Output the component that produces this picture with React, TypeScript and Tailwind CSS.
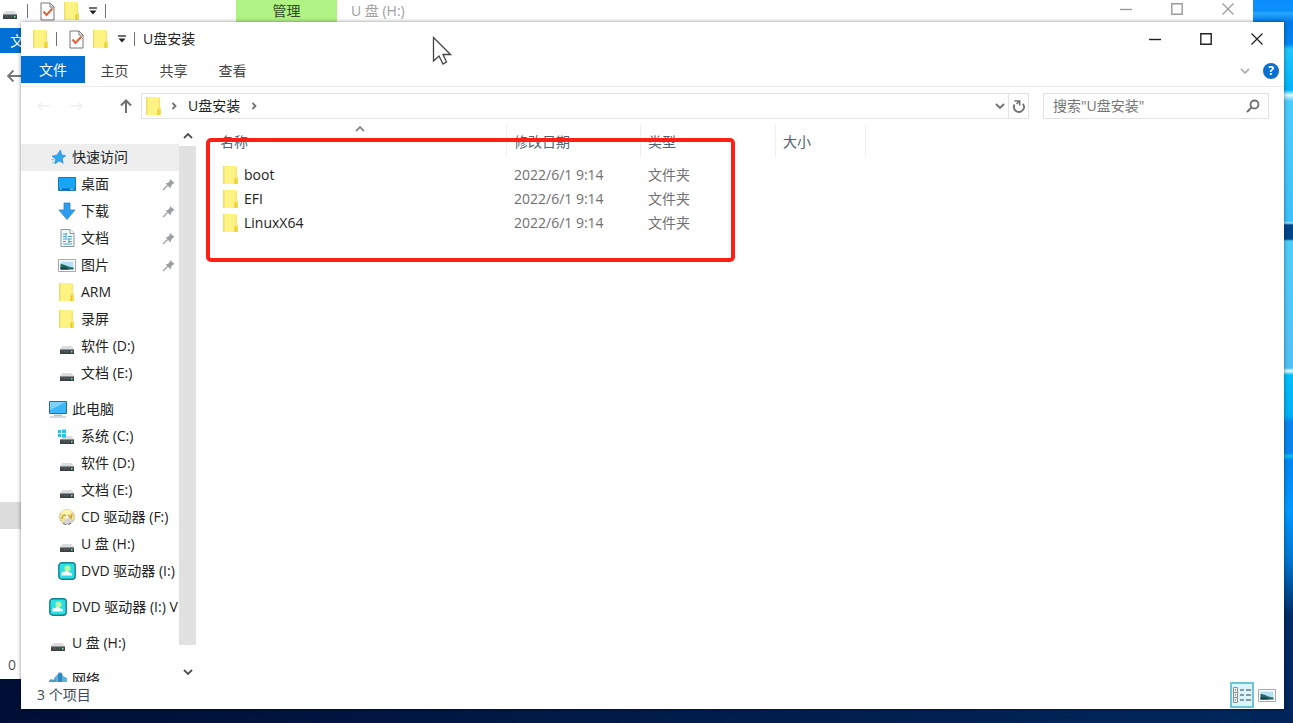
import type { ReactNode } from "react";

interface NavItem {
  name: string;
  icon: ReactNode;
  pinned?: boolean;
}

interface NavGroup extends NavItem {
  children?: NavItem[];
}

const FolderIcon = () => (
  <svg width="18" height="20" viewBox="0 0 18 20" className="shrink-0">
    <path d="M1.5 1h13v18h-13z" fill="#fdf382" />
    <path d="M1 1h1.500v18H1z" fill="#f0dc6c" />
    <path d="M13.500 2.500l1.500-.5v17h-1.500z" fill="#f8e668" />
    <path d="M12 13.500l3-1.500 1 1v6h-4z" fill="#f4de4a" />
    <path d="M13.500 14v5" stroke="#e2c63c" strokeWidth="1" />
  </svg>
);

const CheckDocIcon = () => (
  <svg width="15" height="19" viewBox="0 0 15 19" className="shrink-0">
    <path d="M1 1h9l4 4v13H1z" fill="#fff" stroke="#777" />
    <path d="M10 1v4h4" fill="none" stroke="#777" />
    <path d="M3.500 9.500l3 3.500 6-6.500" fill="none" stroke="#e0633c" strokeWidth="2" />
  </svg>
);

const CaretIcon = () => (
  <svg width="10" height="8" viewBox="0 0 10 8" className="shrink-0">
    <path d="M1 1h8" stroke="#222" strokeWidth="1.300" />
    <path d="M1.500 3.500h7L5 7.500z" fill="#222" />
  </svg>
);

const DriveIcon = () => (
  <svg width="18" height="18" viewBox="0 0 18 18" className="shrink-0">
    <path d="M4.500 9h9l2.500 3H2z" fill="#dadcde" />
    <path d="M2 12h14v5H2z" fill="#3b4044" />
    <path d="M2 12h14v1.200H2z" fill="#8a9094" />
    <path d="M4 14.800h7" stroke="#6b7276" strokeDasharray="1 1" />
    <path d="M13 14h1.500v1.500H13z" fill="#7df0a0" />
  </svg>
);

const SystemDriveIcon = () => (
  <svg width="18" height="18" viewBox="0 0 18 18" className="shrink-0">
    <path d="M6 9h7.500l2.500 3H3z" fill="#dadcde" />
    <path d="M2 12h14v5H2z" fill="#3b4044" />
    <path d="M2 12h14v1.200H2z" fill="#8a9094" />
    <path d="M4 14.800h7" stroke="#6b7276" strokeDasharray="1 1" />
    <path d="M13 14h1.500v1.500H13z" fill="#7df0a0" />
    <path d="M0 3h3v3H0zM4 2.500h4V6H4zM0 7h3v3H0zM4 7h4v3.500H4z" fill="#22c2ea" />
  </svg>
);

const StarIcon = () => (
  <svg width="18" height="18" viewBox="0 0 18 18" className="shrink-0">
    <path
      d="M11.500 2l1 4.700 4.300 1.100-3.600 2.700 1 4.800-4.100-2.400-4.200 3 .9-4.700L3 8l4.800-.8z"
      fill="#2fa8ee"
      stroke="#1b84cc"
      strokeWidth=".6"
    />
    <path d="M2 12l3.500-1M3 15l3-2" stroke="#6cc4f4" />
  </svg>
);

const DesktopIcon = () => (
  <svg width="18" height="18" viewBox="0 0 18 18" className="shrink-0">
    <path d="M.5 2.500h17v13H.5z" fill="#16a5f7" stroke="#1678b8" />
    <path d="M1 13.500h16V15H1z" fill="#0b6cb0" />
    <path d="M2 14.200h1.500M12 14.200h3.500" stroke="#9be0ff" />
  </svg>
);

const DownloadIcon = () => (
  <svg width="18" height="18" viewBox="0 0 18 18" className="shrink-0">
    <path d="M6 1h6v7h5l-8 9.500L1 8h5z" fill="#2d9df0" stroke="#1d7cc6" strokeWidth=".7" />
  </svg>
);

const DocumentIcon = () => (
  <svg width="18" height="18" viewBox="0 0 18 18" className="shrink-0">
    <path d="M3 .5h9l4 4v13H3z" fill="#f3f8fa" stroke="#8b979c" />
    <path d="M12 .5v4h4" fill="#fff" stroke="#8b979c" />
    <path d="M5 5h4M5 7.500h3m2 0h4M5 10h9M5 12.500h3m2 0h4M5 15h9" stroke="#4aa5c6" />
    <path d="M8 4v5M11 10v4" stroke="#4aa5c6" />
  </svg>
);

const PictureIcon = () => (
  <svg width="18" height="18" viewBox="0 0 18 18" className="shrink-0">
    <path d="M.5 3.500h17v12H.5z" fill="#fff" stroke="#a4a9ac" />
    <path d="M2.500 5.500h13v8h-13z" fill="#b6e0f5" />
    <path d="M2.500 8c4 0 7 3 13 3.500v2h-13z" fill="#256a62" />
    <path d="M2.500 11.500h5l4 2h-9z" fill="#123d52" />
  </svg>
);

const ComputerIcon = () => (
  <svg width="18" height="18" viewBox="0 0 18 18" className="shrink-0">
    <path d="M.5 1.500h17v12H.5z" fill="#3bb7f8" stroke="#276f9c" />
    <path d="M1 2h16L1 10z" fill="#7dd3fb" />
    <path d="M5 15.200h8" stroke="#9aa4aa" />
    <path d="M1 17h16" stroke="#a9b6bd" />
  </svg>
);

const DiscIcon = () => (
  <svg width="18" height="18" viewBox="0 0 18 18" className="shrink-0">
    <circle cx="9" cy="9" r="7.500" fill="#f3e690" stroke="#cfc6a0" />
    <path d="M3 4.500a7.500 7.500 0 0 1 11-1L9 9z" fill="#fbf3b0" />
    <path d="M15.500 12a7.500 7.500 0 0 1-11 3L9 9z" fill="#d6d2da" />
    <path d="M4 11c0-4 3-5 4-3M10 7l3 3 1-4" fill="none" stroke="#c99a3c" strokeWidth="1.400" />
    <circle cx="9" cy="9" r="1.500" fill="#fff" />
    <path d="M5 15.500l3 1M10 16.500l3-1.500" stroke="#77757c" />
  </svg>
);

const DvdIcon = () => (
  <svg width="18" height="18" viewBox="0 0 18 18" className="shrink-0">
    <rect x=".8" y=".8" width="16.400" height="16.400" rx="3" fill="#2be0e4" stroke="#167f8c" strokeWidth="1.400" />
    <circle cx="9.500" cy="6.500" r="3" fill="#b8f5a0" />
    <path d="M3.500 13.500c-.5-2.500 1-4.500 3-3.500 1-2 4-1.500 4.500.5 2-.5 3.500 1 3 3z" fill="#f2fffd" />
  </svg>
);

const NetworkIcon = () => (
  <svg width="18" height="18" viewBox="0 0 18 18" className="shrink-0">
    <path d="M5 8l4-4 1-2 3 1 1 3 4 2v8H5z" fill="#5fb0da" />
    <path d="M9 4l4-1v11H9z" fill="#2f86b9" />
    <path d="M0 11c1-2 3-2 5-1l2-1v6H0z" fill="#4d9cc0" />
    <path d="M0 14h18" stroke="#3f6f88" />
  </svg>
);

const PinIcon = () => (
  <svg width="13" height="13" viewBox="0 0 13 13" className="shrink-0">
    <path d="M8 1l4.500 4-1.500.7-2 2.300-.3 2.500-5.200-5 2.500-.4 2-2.600z" fill="#9a9fa3" />
    <path d="M5.500 7.500L1 12" stroke="#9a9fa3" strokeWidth="1.300" />
  </svg>
);

const Chevron = ({ d, className }: { d: string; className?: string }) => (
  <svg width="12" height="12" viewBox="0 0 12 12" className={`shrink-0 ${className ?? ""}`}>
    <path d={d} fill="none" stroke="currentColor" strokeWidth="1.800" />
  </svg>
);

const UP = "M2 8l4-4 4 4";
const DOWN = "M2 4l4 4 4-4";
const RIGHT = "M4.500 3l3 3-3 3";

const navGroups: NavGroup[] = [
  {
    name: "快速访问",
    icon: <StarIcon />,
    children: [
      { name: "桌面", icon: <DesktopIcon />, pinned: true },
      { name: "下载", icon: <DownloadIcon />, pinned: true },
      { name: "文档", icon: <DocumentIcon />, pinned: true },
      { name: "图片", icon: <PictureIcon />, pinned: true },
      { name: "ARM", icon: <FolderIcon /> },
      { name: "录屏", icon: <FolderIcon /> },
      { name: "软件 (D:)", icon: <DriveIcon /> },
      { name: "文档 (E:)", icon: <DriveIcon /> },
    ],
  },
  {
    name: "此电脑",
    icon: <ComputerIcon />,
    children: [
      { name: "系统 (C:)", icon: <SystemDriveIcon /> },
      { name: "软件 (D:)", icon: <DriveIcon /> },
      { name: "文档 (E:)", icon: <DriveIcon /> },
      { name: "CD 驱动器 (F:)", icon: <DiscIcon /> },
      { name: "U 盘 (H:)", icon: <DriveIcon /> },
      { name: "DVD 驱动器 (I:)", icon: <DvdIcon /> },
    ],
  },
  { name: "DVD 驱动器 (I:) V", icon: <DvdIcon /> },
  { name: "U 盘 (H:)", icon: <DriveIcon /> },
  { name: "网络", icon: <NetworkIcon /> },
];

const files = [
  { name: "boot", date: "2022/6/1 9:14", type: "文件夹" },
  { name: "EFI", date: "2022/6/1 9:14", type: "文件夹" },
  { name: "LinuxX64", date: "2022/6/1 9:14", type: "文件夹" },
];

const Separator = () => <span className="h-[14px] w-px shrink-0 bg-gray-500" />;

const WindowControls = () => (
  <div className="ml-auto flex h-full">
    <button aria-label="最小化" className="flex w-[51px] items-center justify-center">
      <svg width="12" height="12" viewBox="0 0 12 12">
        <path d="M0 6.500h12" stroke="currentColor" strokeWidth="1.400" />
      </svg>
    </button>
    <button aria-label="最大化" className="flex w-[51px] items-center justify-center">
      <svg width="12" height="12" viewBox="0 0 12 12">
        <path d="M.8.8h10.400v10.400H.8z" fill="none" stroke="currentColor" strokeWidth="1.400" />
      </svg>
    </button>
    <button aria-label="关闭" className="flex w-[51px] items-center justify-center">
      <svg width="12" height="12" viewBox="0 0 12 12">
        <path d="M.5.5l11 11M11.500.5l-11 11" stroke="currentColor" strokeWidth="1.200" />
      </svg>
    </button>
  </div>
);

const NavRow = ({ item, nested, active }: { item: NavItem; nested?: boolean; active?: boolean }) => (
  <a
    href="#"
    className={`flex h-[27px] items-center gap-[5px] overflow-hidden pr-1 pb-px whitespace-nowrap ${
      nested ? "pl-[37px]" : "pl-7"
    } ${active ? "bg-[#eeeeee]" : ""}`}
  >
    {item.icon}
    <span>{item.name}</span>
    {item.pinned && (
      <span className="ml-auto">
        <PinIcon />
      </span>
    )}
  </a>
);

const BackWindow = () => (
  <div className="absolute top-0 right-10 bottom-11 left-0 overflow-hidden bg-white">
    <div className="flex h-[22px] items-center">
      <div className="flex w-[236px] items-center pl-px">
        <DriveIcon />
        <span className="mr-3 ml-2 flex">
          <Separator />
        </span>
        <CheckDocIcon />
        <span className="mx-2 flex items-center gap-[7px]">
          <FolderIcon />
          <CaretIcon />
          <Separator />
        </span>
      </div>
      <div className="flex h-full w-[101px] items-center justify-center bg-[#b0f284] text-[#304a24]">
        管理
      </div>
      <span className="pl-[14px] text-[#a0a0a0]">U 盘 (H:)</span>
      <div className="ml-auto flex h-full pb-1 text-[#9a9a9a]">
        <WindowControls />
      </div>
    </div>
    <div className="mt-[6px] flex h-[25px] w-20 items-center bg-[#0070d4] pl-[10px] text-white">
      文件
    </div>
    <div className="mt-3 pl-[7px] text-[#777]">
      <svg width="24" height="22" viewBox="0 0 24 22">
        <path d="M24 11H1M6.500 5.500L1 11l5.500 5.500" fill="none" stroke="currentColor" strokeWidth="1.800" />
      </svg>
    </div>
    <div className="mt-[415px] h-[27px] bg-[#dcdcdc]" />
    <div className="mt-[126px] pl-2 text-[#555]">0</div>
  </div>
);

const NavPane = () => (
  <aside className="flex w-[175px] shrink-0">
    <nav className="min-w-0 flex-1 overflow-hidden pt-[19px]">
      <ul className="flex flex-col gap-[9px]">
        {navGroups.map((group, i) => (
          <li key={group.name}>
            <NavRow item={group} active={i === 0} />
            {group.children && (
              <ul>
                {group.children.map((item) => (
                  <li key={item.name}>
                    <NavRow item={item} nested />
                  </li>
                ))}
              </ul>
            )}
          </li>
        ))}
      </ul>
    </nav>
    <div className="flex w-[17px] flex-col items-center text-[#505050]">
      <button aria-label="向上滚动" className="flex h-[21px] items-center">
        <Chevron d={UP} />
      </button>
      <div className="mb-4 w-full flex-1 bg-[#e1e1e1]" />
      <button aria-label="向下滚动" className="flex h-[21px] items-center">
        <Chevron d={DOWN} />
      </button>
    </div>
  </aside>
);

const headCell = "h-8 border-r border-[#eeeeee] pt-[7px]";

const FileList = () => (
  <main className="relative min-w-0 flex-1">
    <table className="table-fixed border-collapse text-left text-[#707070]">
      <colgroup>
        <col className="w-[311px]" />
        <col className="w-[134px]" />
        <col className="w-[135px]" />
        <col className="w-[90px]" />
      </colgroup>
      <thead className="text-[#4f6272]">
        <tr>
          <th className="p-0 pb-[6px] font-normal">
            <div className={`${headCell} pl-6`}>名称</div>
          </th>
          <th className="p-0 pb-[6px] font-normal">
            <div className={`${headCell} pl-[7px]`}>修改日期</div>
          </th>
          <th className="p-0 pb-[6px] font-normal">
            <div className={`${headCell} pl-[7px]`}>类型</div>
          </th>
          <th className="p-0 pb-[6px] font-normal">
            <div className={`${headCell} pl-[7px]`}>大小</div>
          </th>
        </tr>
      </thead>
      <tbody>
        {files.map((file) => (
          <tr key={file.name} className="h-6">
            <td className="p-0 pl-[26px] text-[#222]">
              <span className="flex items-center gap-1">
                <FolderIcon />
                {file.name}
              </span>
            </td>
            <td className="p-0 pl-[7px]">{file.date}</td>
            <td className="p-0 pl-[7px]">{file.type}</td>
            <td />
          </tr>
        ))}
      </tbody>
    </table>
    {/* sort direction mark over the name column */}
    <Chevron d={UP} className="absolute -top-[2px] left-[158px] text-[#8a8a8a]" />
    {/* highlight frame */}
    <div className="absolute top-[13px] left-[10px] h-[124px] w-[529px] rounded-[5px] border-4 border-[#ff2015]" />
  </main>
);

const FrontWindow = () => (
  <div className="absolute top-[22px] right-[9px] bottom-[14px] left-[21px] flex flex-col bg-white shadow-[0_0_4px_rgba(0,0,0,0.45)]">
    <header className="flex h-[34px] shrink-0 items-center pr-[2px] pl-[11px]">
      <FolderIcon />
      <span className="mr-3 ml-[6px] flex">
        <Separator />
      </span>
      <CheckDocIcon />
      <span className="mx-2 flex items-center gap-[7px]">
        <FolderIcon />
        <CaretIcon />
        <Separator />
      </span>
      <h1>U盘安装</h1>
      <WindowControls />
    </header>

    <div className="flex h-[31px] shrink-0 items-start border-b border-[#ececec] text-[#444]">
      <button className="h-[27px] w-16 bg-[#0070d4] text-white">文件</button>
      <button className="h-[29px] w-[59px]">主页</button>
      <button className="h-[29px] w-[59px]">共享</button>
      <button className="h-[29px] w-[59px]">查看</button>
      <div className="ml-auto flex h-[30px] items-center gap-3 pr-[5px]">
        <button aria-label="展开功能区" className="text-[#b4b4b4]">
          <Chevron d={DOWN} />
        </button>
        <button
          aria-label="帮助"
          className="flex size-4 items-center justify-center rounded-full bg-[#0a6fd0] text-xs font-bold text-white"
        >
          ?
        </button>
      </div>
    </div>

    <div className="flex h-[38px] shrink-0 items-center pr-[15px] text-[#707070]">
      <div className="flex w-[120px] items-center gap-[18px] pl-4">
        <svg width="14" height="14" viewBox="0 0 14 14" className="text-[#f0f0f0]">
          <path d="M13 7H1M5 3L1 7l4 4" fill="none" stroke="currentColor" strokeWidth="1.500" />
        </svg>
        <svg width="14" height="14" viewBox="0 0 14 14" className="text-[#f0f0f0]">
          <path d="M1 7h12M9 3l4 4-4 4" fill="none" stroke="currentColor" strokeWidth="1.500" />
        </svg>
        <button aria-label="上一级" className="ml-auto pr-2">
          <svg width="14" height="14" viewBox="0 0 14 14">
            <path d="M7 14V1.500M2 6.500l5-5 5 5" fill="none" stroke="currentColor" strokeWidth="2" />
          </svg>
        </button>
      </div>
      <div className="flex h-[26px] flex-1 items-center border border-[#e2e2e2] pb-px pl-[3px]">
        <FolderIcon />
        <Chevron d={RIGHT} className="mr-2 ml-[5px]" />
        <span className="text-[#222]">U盘安装</span>
        <Chevron d={RIGHT} className="ml-2" />
        <button aria-label="历史记录" className="ml-auto pr-[2px]">
          <Chevron d={DOWN} />
        </button>
        <button
          aria-label="刷新"
          className="flex h-6 w-5 items-center justify-center border-l border-[#e2e2e2]"
        >
          <svg width="14" height="14" viewBox="0 0 14 14">
            <path d="M2.500 5.500a5 5 0 1 0 8.300-.8" fill="none" stroke="currentColor" strokeWidth="1.800" />
            <path d="M2.500 2h5.200v4.500M7.500 2.200L4.500 5" fill="none" stroke="currentColor" strokeWidth="1.500" />
          </svg>
        </button>
      </div>
      <div className="ml-[14px] flex h-[26px] w-[226px] items-center border border-[#e2e2e2] pr-2 pl-[9px]">
        <input
          type="text"
          aria-label="搜索"
          placeholder={'搜索"U盘安装"'}
          className="min-w-0 flex-1 outline-none placeholder:text-[#757575]"
        />
        <svg width="14" height="14" viewBox="0 0 14 14">
          <circle cx="8.500" cy="5.500" r="4" fill="none" stroke="currentColor" strokeWidth="1.800" />
          <path d="M5.500 8.500L1 13" stroke="currentColor" strokeWidth="2" />
        </svg>
      </div>
    </div>

    <div className="flex min-h-0 flex-1">
      <NavPane />
      <FileList />
    </div>

    <footer className="flex h-[27px] shrink-0 items-center pr-2 pb-[2px] pl-4 text-[#3b4a5a]">
      3 个项目
      <button
        aria-label="详细信息"
        className="ml-auto flex h-[26px] w-6 items-center justify-center border-2 border-[#6cc6d8] bg-[#d9f5fa]"
      >
        <svg width="18" height="16" viewBox="0 0 18 16" className="shrink-0">
          <path d="M.5.500h4v15h-4zM.5 5.500h4M.5 10.500h4" fill="#eee" stroke="#909090" />
          <path d="M2 3h1M2 8h1M2 13h1" stroke="#555" />
          <path d="M7 3h4M13 3h5M7 8h4M13 8h5M7 13h4M13 13h5" stroke="#6b7c80" strokeWidth="1.300" />
        </svg>
      </button>
      <button aria-label="大图标" className="ml-1">
        <PictureIcon />
      </button>
    </footer>
  </div>
);

const App = () => {
  return (
    <div className="relative h-screen overflow-hidden bg-linear-to-r from-[#000f36] to-[#00285c] font-['Open_Sans','Noto_Sans_CJK_SC',sans-serif] text-sm leading-5 text-[#222]">
      <div className="absolute inset-y-0 right-0 w-10 bg-[linear-gradient(to_bottom,#0a8cff_0px,#0a90fa_11px,#28a8ff_13px,#0078e8_22px,#0084f0_44px,#20c4fc_49px,#00b4f8_90px,#e0faff_95px,#4cccfc_101px,#3cc0f8_221px,#a0e0ff_223px,#00458a_225px,#00458a_239px,#50ccfa_241px,#50c0f4_368px,#e8ffff_371px,#00bcf8_375px,#00b0f4_416px,#0884ec_422px,#0884ec_453px,#10c0f0_456px,#0084f0_460px,#0098ff_510px,#0070c8_565px,#002c64_615px,#00245a_723px)]" />
      <BackWindow />
      <FrontWindow />
      <svg
        width="20"
        height="30"
        viewBox="0 0 20 30"
        className="absolute top-9 left-[432px]"
      >
        <path
          d="M1.500 1.500v23.500l5.500-5 4 8 3.500-2-3.500-7.500h7.500z"
          fill="#fff"
          stroke="#444"
          strokeWidth="1.300"
        />
      </svg>
    </div>
  );
};

export default App;
